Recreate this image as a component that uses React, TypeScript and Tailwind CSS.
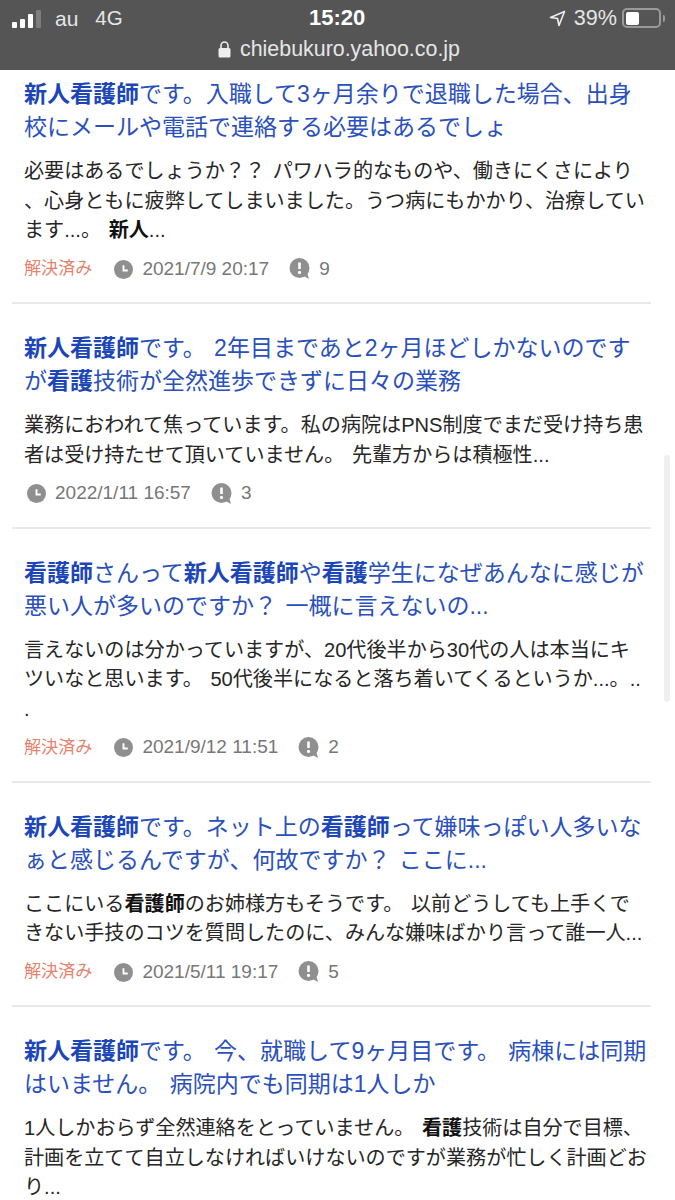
const font = { fontFamily: '"Liberation Sans", "Noto Sans CJK JP", sans-serif' };
const latin = { fontFamily: '"Liberation Sans", sans-serif' };

type Seg = string | { b: string };
type Item = { title: Seg[]; body: Seg[]; solved: boolean; date: string; count: string };

const items: Item[] = [
  {
    title: [{ b: "新人看護師" }, "です。入職して3ヶ月余りで退職した場合、出身校にメールや電話で連絡する必要はあるでしょ"],
    body: ["必要はあるでしょうか？？ パワハラ的なものや、働きにくさにより、心身ともに疲弊してしまいました。うつ病にもかかり、治療しています...。 ", { b: "新人" }, "..."],
    solved: true, date: "2021/7/9 20:17", count: "9",
  },
  {
    title: [{ b: "新人看護師" }, "です。 2年目まであと2ヶ月ほどしかないのですが", { b: "看護" }, "技術が全然進歩できずに日々の業務"],
    body: ["業務におわれて焦っています。私の病院はPNS制度でまだ受け持ち患者は受け持たせて頂いていません。 先輩方からは積極性..."],
    solved: false, date: "2022/1/11 16:57", count: "3",
  },
  {
    title: [{ b: "看護師" }, "さんって", { b: "新人看護師" }, "や", { b: "看護" }, "学生になぜあんなに感じが悪い人が多いのですか？ 一概に言えないの..."],
    body: ["言えないのは分かっていますが、20代後半から30代の人は本当にキツいなと思います。 50代後半になると落ち着いてくるというか...。.. ."],
    solved: true, date: "2021/9/12 11:51", count: "2",
  },
  {
    title: [{ b: "新人看護師" }, "です。ネット上の", { b: "看護師" }, "って嫌味っぽい人多いなぁと感じるんですが、何故ですか？ ここに..."],
    body: ["ここにいる", { b: "看護師" }, "のお姉様方もそうです。 以前どうしても上手くできない手技のコツを質問したのに、みんな嫌味ばかり言って誰一人..."],
    solved: true, date: "2021/5/11 19:17", count: "5",
  },
  {
    title: [{ b: "新人看護師" }, "です。 今、就職して9ヶ月目です。 病棟には同期はいません。 病院内でも同期は1人しか"],
    body: ["1人しかおらず全然連絡をとっていません。 ", { b: "看護" }, "技術は自分で目標、計画を立てて自立しなければいけないのですが業務が忙しく計画どおり..."],
    solved: false, date: "", count: "",
  },
];

function Segs({ segs, strong }: { segs: Seg[]; strong: string }) {
  return (
    <>
      {segs.map((s, i) =>
        typeof s === "string" ? <span key={i}>{s}</span> : <b key={i} className={strong}>{s.b}</b>
      )}
    </>
  );
}

function Clock() {
  return (
    <svg width="19" height="19" viewBox="0 0 20 20" className="shrink-0">
      <circle cx="10" cy="10" r="10" fill="#8f8f8f" />
      <path d="M10 5.5V11H14.5" stroke="#fff" strokeWidth="2" fill="none" />
    </svg>
  );
}

function Bubble() {
  return (
    <svg width="22" height="22" viewBox="0 0 22 22" className="shrink-0">
      <circle cx="10.5" cy="10" r="10" fill="#8f8f8f" />
      <path d="M13 17L20 21L18 14Z" fill="#8f8f8f" />
      <path d="M10.5 4.5V11" stroke="#fff" strokeWidth="2.6" />
      <circle cx="10.5" cy="14.4" r="1.6" fill="#fff" />
    </svg>
  );
}

function Row({ item, last }: { item: Item; last: boolean }) {
  return (
    <div className={last ? "pt-[28px]" : "pt-[28px] pb-[18px] border-b-2 border-[#e9e9e9]"}>
      <div className="pl-[12px] w-[636px] text-[23px] leading-[33px] text-[#2a50bd] [line-break:anywhere] [word-spacing:2px]">
        <Segs segs={item.title} strong="font-bold text-[#1c46b8]" />
      </div>
      <div className="mt-[13px] pl-[12px] w-[636px] text-[20.1px] leading-[29.5px] text-[#262626] [line-break:anywhere] [word-spacing:2px]">
        <Segs segs={item.body} strong="font-bold text-[#111]" />
      </div>
      {item.date && (
        <div className="mt-[8.5px] pl-[12px] h-[30px] flex items-center text-[19px] text-[#777]">
          {item.solved ? <span className="mr-[22px] text-[17.1px] text-[#e4836b]">解決済み</span> : <span className="w-[3px]" />}
          <Clock />
          <span className="ml-[9px] mr-[20px]" style={latin}>{item.date}</span>
          <Bubble />
          <span className="ml-[8px]" style={latin}>{item.count}</span>
        </div>
      )}
    </div>
  );
}

export default function App() {
  return (
    <div className="relative w-[675px] h-[1200px] overflow-hidden bg-white" style={font}>
      <header className="h-[70px] bg-[#555555] text-[#e6e6e6] flex flex-col" style={latin}>
        <div className="h-[37px] flex items-center justify-between pl-[12px] pr-[10px] relative">
          <div className="flex items-center">
            <div className="flex items-end gap-[3px] h-[18px]">
              <span className="w-[5px] h-[6px] rounded-[1px] bg-white" />
              <span className="w-[5px] h-[9px] rounded-[1px] bg-white" />
              <span className="w-[5px] h-[14px] rounded-[1px] bg-white" />
              <span className="w-[5px] h-[18px] rounded-[1px] bg-[#7d7d7d]" />
            </div>
            <span className="ml-[14px] text-[21px]">au</span>
            <span className="ml-[17px] text-[20.5px]">4G</span>
          </div>
          <span className="absolute left-[309px] top-[5px] text-[22px] font-bold text-white leading-[26px]">15:20</span>
          <div className="flex items-center">
            <svg width="17" height="17" viewBox="0 0 17 17" className="mr-[8px]">
              <path d="M15.5 1.5L1.5 7.5L8.5 8.5L10 15.5Z" stroke="#eee" strokeWidth="1.6" fill="none" strokeLinejoin="round" />
            </svg>
            <span className="text-[21.6px]">39%</span>
            <div className="ml-[5px] w-[39px] h-[20px] rounded-[5px] border-2 border-[#9a9a9a] p-[1.5px]">
              <div className="w-[13px] h-full rounded-[2px] bg-white" />
            </div>
            <span className="ml-[2px] w-[2px] h-[7px] rounded-r-sm bg-[#9a9a9a]" />
          </div>
        </div>
        <div className="flex items-center justify-center h-[24px] pl-[3px] text-[21.4px]">
          <svg width="13" height="17" viewBox="0 0 13 17" className="mr-[9px]">
            <path d="M3 7V4.5a3.5 3.5 0 0 1 7 0V7" stroke="#eee" strokeWidth="1.6" fill="none" />
            <rect x="0.5" y="7" width="12" height="9.5" rx="1.5" fill="#eee" />
          </svg>
          chiebukuro.yahoo.co.jp
        </div>
      </header>
      <main className="px-[12px] w-[663px] [&>div:first-child]:pt-[8px]">
        {items.map((it, i) => (
          <Row key={i} item={it} last={i === items.length - 1} />
        ))}
      </main>
      <div className="absolute left-[664px] top-[455px] w-[6px] h-[247px] rounded-full bg-[#efefef]" />
    </div>
  );
}
